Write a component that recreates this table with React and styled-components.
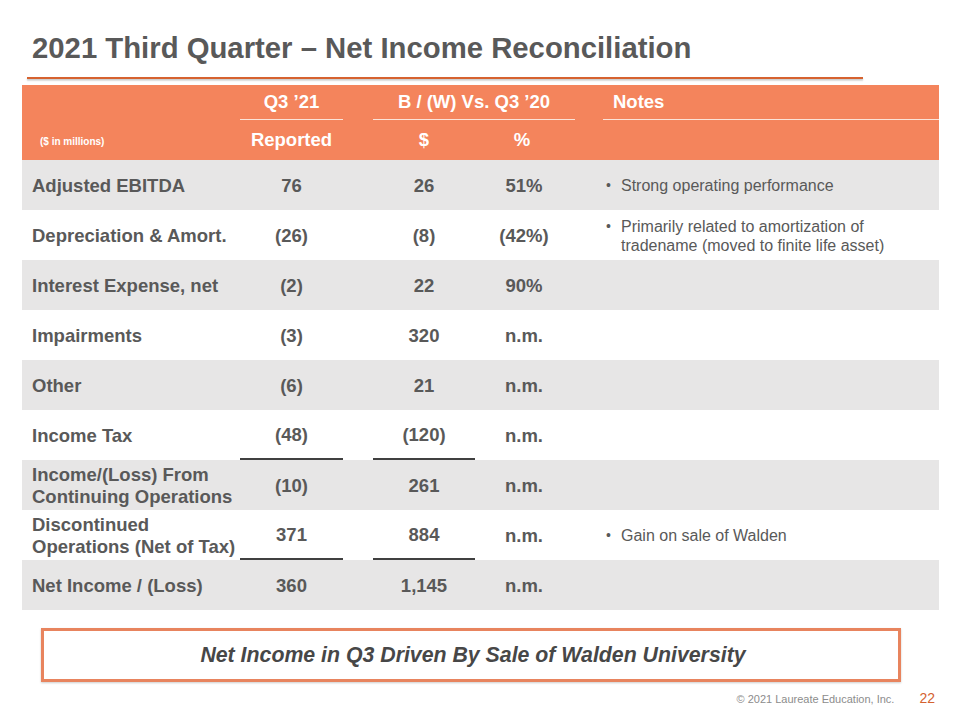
import React from 'react'
import styled, { createGlobalStyle } from 'styled-components'

// -- GLOBAL -- //
const GlobalStyle = createGlobalStyle`
    html, body {
        margin: 0;
        padding: 0;
        background: #ffffff;
        font-family: "Liberation Sans", Arial, sans-serif;
    }
`;

// -- STYLED COMPONENTS -- //
const Slide = styled.div`
    width: 960px;
    height: 720px;
    box-sizing: border-box;
    padding: 31px 21px 0 22px;
    display: flex;
    flex-direction: column;
    color: #595959;
`;
const Title = styled.h1`
    margin: 0 0 0 10px;
    font-size: 29.3px;
    line-height: 34px;
    font-weight: 700;
    color: #595959;
`;
const TitleRule = styled.div`
    margin: 12px 0 0 5px;
    width: 836px;
    height: 2px;
    background: #d6622f;
    box-shadow: 0 1.5px 1.5px rgba(120, 120, 120, 0.45);
`;
const Table = styled.div`
    margin-top: 6px;
    display: grid;
    grid-template-columns: 218px 103px 30px 102px 100px 28px 336px;
`;
const HeadCell = styled.div`
    background: #f4845c;
    color: #ffffff;
    font-weight: 700;
    font-size: 18.5px;
    display: flex;
    align-items: center;
    justify-content: ${p => (p.left ? 'flex-start' : 'center')};
    height: ${p => (p.top ? '35px' : '40px')};
    box-sizing: border-box;
    padding-left: ${p => p.pl || 0}px;
    padding-right: ${p => p.pr || 0}px;
    grid-column: ${p => p.span || 'auto'};
    border-bottom: ${p => (p.line ? '1.5px solid #fbe3d8' : '0')};
`;
const Units = styled.span`
    font-size: 10px;
    padding-top: 2px;
`;
const Cell = styled.div`
    height: 50px;
    box-sizing: border-box;
    background: ${p => (p.shade ? '#e7e6e6' : '#ffffff')};
    display: flex;
    align-items: center;
    justify-content: ${p => (p.left ? 'flex-start' : 'center')};
    padding-left: ${p => p.pl || 0}px;
    padding-right: ${p => p.pr || 0}px;
    padding-top: 1px;
    font-size: 18.5px;
    font-weight: 700;
    line-height: 22px;
    color: #595959;
`;
const Total = styled.div`
    width: 100%;
    align-self: stretch;
    display: flex;
    align-items: center;
    justify-content: center;
    box-sizing: border-box;
    border-bottom: ${p => (p.rule ? '2px solid #404040' : '0')};
`;
const NoteList = styled.ul`
    margin: 0;
    padding: 0 12px 0 3px;
    list-style: none;
    font-size: 16px;
    font-weight: 400;
    line-height: 19px;
    color: #595959;
`;
const NoteItem = styled.li`
    position: relative;
    padding-left: 15px;
    &::before {
        content: '•';
        position: absolute;
        left: 0;
        top: 0;
        font-size: 14px;
        line-height: 19px;
    }
`;
const Callout = styled.div`
    margin: 18px 0 0 19px;
    width: 860px;
    height: 54px;
    box-sizing: border-box;
    border: 3px solid #e8845e;
    box-shadow: 0 1px 2px rgba(0, 0, 0, 0.2);
    display: flex;
    align-items: center;
    justify-content: center;
    font-size: 21.3px;
    font-weight: 700;
    font-style: italic;
    color: #474747;
    padding-left: 4px;
`;
const Footer = styled.div`
    margin-top: 8px;
    display: flex;
    justify-content: flex-end;
    align-items: baseline;
    gap: 25px;
    padding-right: 4px;
`;
const Copyright = styled.span`
    font-size: 11px;
    color: #8c8c8c;
`;
const PageNo = styled.span`
    font-size: 14px;
    color: #d4622f;
`;

// -- DATA -- //
const rows = [
    { label: 'Adjusted EBITDA', q: '76', d: '26', p: '51%', notes: ['Strong operating performance'] },
    { label: 'Depreciation & Amort.', q: '(26)', d: '(8)', p: '(42%)', notes: ['Primarily related to amortization of tradename (moved to finite life asset)'] },
    { label: 'Interest Expense, net', q: '(2)', d: '22', p: '90%' },
    { label: 'Impairments', q: '(3)', d: '320', p: 'n.m.' },
    { label: 'Other', q: '(6)', d: '21', p: 'n.m.' },
    { label: 'Income Tax', q: '(48)', d: '(120)', p: 'n.m.', rule: true },
    { label: 'Income/(Loss) From Continuing Operations', q: '(10)', d: '261', p: 'n.m.' },
    { label: 'Discontinued Operations (Net of Tax)', q: '371', d: '884', p: 'n.m.', rule: true, notes: ['Gain on sale of Walden'] },
    { label: 'Net Income / (Loss)', q: '360', d: '1,145', p: 'n.m.' },
]

// -- COMPONENT TO EXPORT - //
function App() {
    return (
        <Slide>
            <GlobalStyle />
            <Title>2021 Third Quarter – Net Income Reconciliation</Title>
            <TitleRule />
            <Table>
                <HeadCell top />
                <HeadCell top line>Q3 ’21</HeadCell>
                <HeadCell top />
                <HeadCell top line span="span 2">B / (W) Vs. Q3 ’20</HeadCell>
                <HeadCell top />
                <HeadCell top line left pl={10}>Notes</HeadCell>

                <HeadCell left pl={18}><Units>($ in millions)</Units></HeadCell>
                <HeadCell>Reported</HeadCell>
                <HeadCell />
                <HeadCell>$</HeadCell>
                <HeadCell pr={6}>%</HeadCell>
                <HeadCell />
                <HeadCell />

                {rows.map((r, i) => {
                    const shade = i % 2 === 0
                    return (
                        <React.Fragment key={r.label}>
                            <Cell shade={shade} left pl={10}>{r.label}</Cell>
                            <Cell shade={shade}><Total rule={r.rule}>{r.q}</Total></Cell>
                            <Cell shade={shade} />
                            <Cell shade={shade}><Total rule={r.rule}>{r.d}</Total></Cell>
                            <Cell shade={shade} pr={2}>{r.p}</Cell>
                            <Cell shade={shade} />
                            <Cell shade={shade} left>
                                {r.notes && (
                                    <NoteList>
                                        {r.notes.map(n => <NoteItem key={n}>{n}</NoteItem>)}
                                    </NoteList>
                                )}
                            </Cell>
                        </React.Fragment>
                    )
                })}
            </Table>
            <Callout>Net Income in Q3 Driven By Sale of Walden University</Callout>
            <Footer>
                <Copyright>© 2021 Laureate Education, Inc.</Copyright>
                <PageNo>22</PageNo>
            </Footer>
        </Slide>
    )
}

// -- EXPORTS -- //
export default App
